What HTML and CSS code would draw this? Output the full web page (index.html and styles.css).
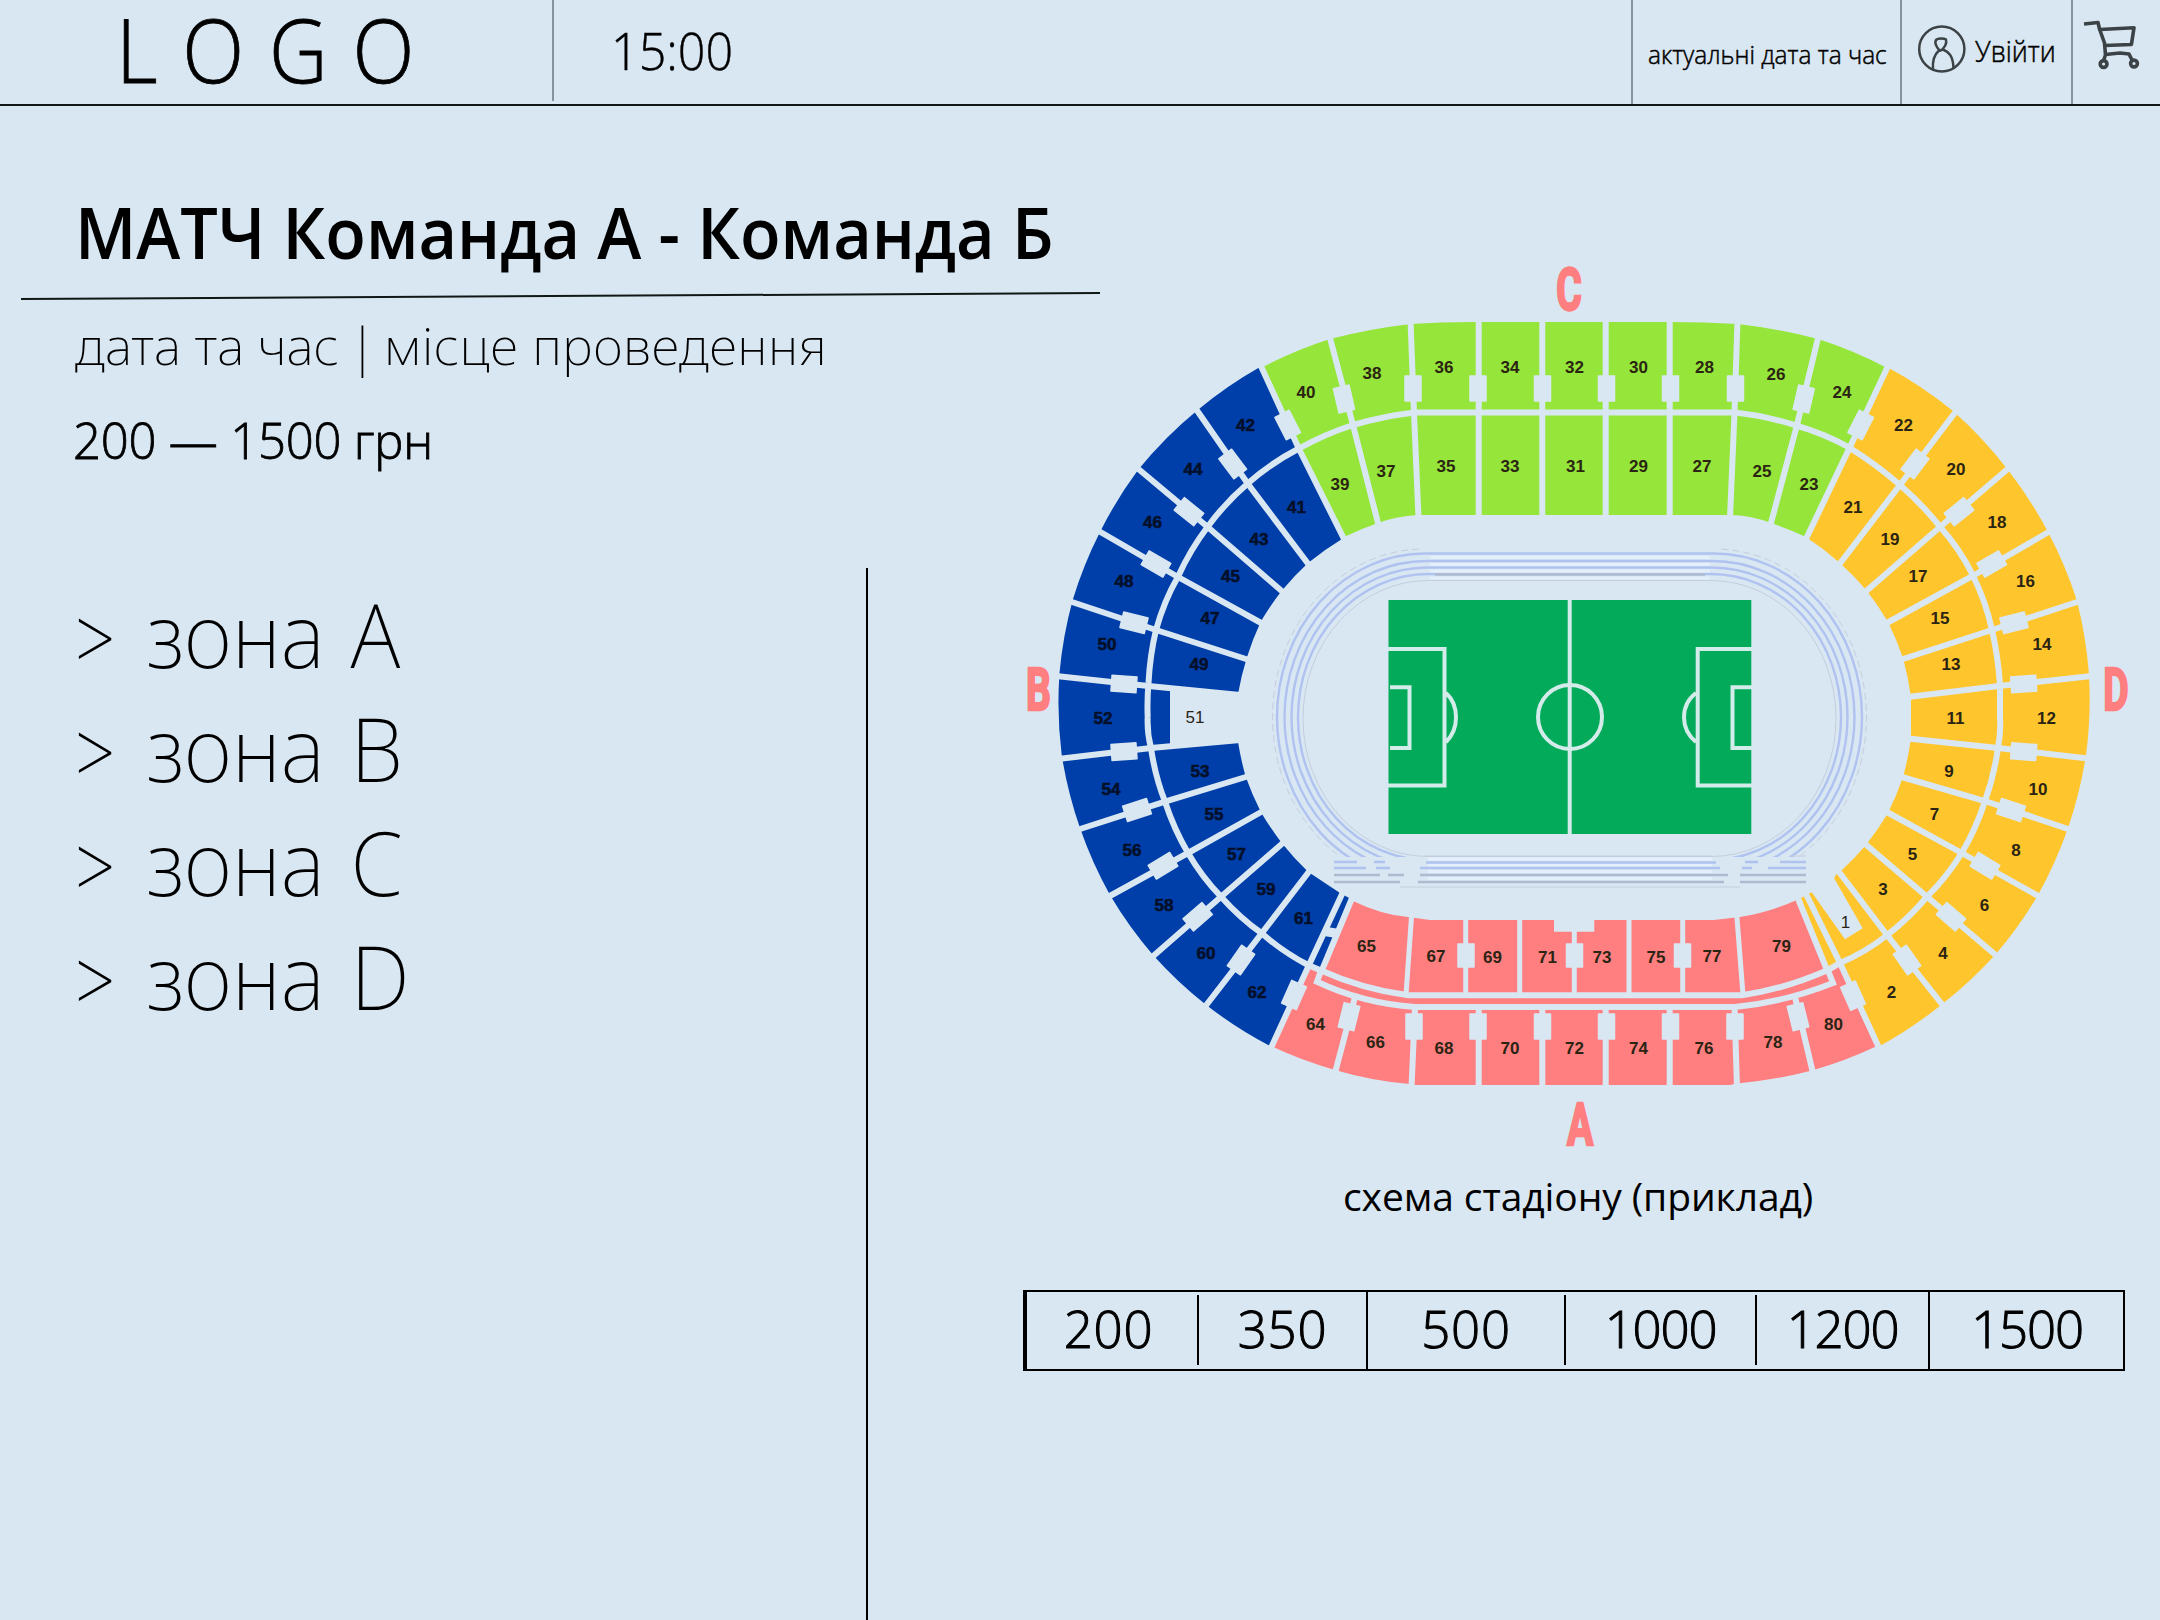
FILE: index.html
```html
<!DOCTYPE html>
<html lang="uk">
<head>
<meta charset="utf-8">
<title>Матч</title>
<link rel="stylesheet" href="styles.css">
</head>
<body>
<header class="topbar">
  <div class="logo"><span>LOGO</span></div>
  <div class="clock"><span>15:00</span></div>
  <div class="now"><span>актуальні дата та час</span></div>
  <div class="login">
    <svg class="user-icon" width="50" height="50" viewBox="1917 24 50 50"><ellipse cx="1941.8" cy="49" rx="22.6" ry="22.4"/><path d="M1940 51C1936 47 1934 42 1936.500 39.500C1939 38 1944 38 1946 39.500C1947 43 1945 48 1940 51M1933 69C1932.500 62 1934 55 1938.500 51L1943 49.500C1949 52 1953 56 1953.500 68"/></svg>
    <span>Увійти</span>
  </div>
  <div class="cart">
    <svg class="cart-icon" width="62" height="54" viewBox="2080 18 62 54"><path d="M2084 24L2098 22.500L2099.500 29L2104.500 43L2105.500 55L2103 62M2100 29.500L2134 27.700L2131.400 44.500L2104.600 45.500M2105.500 54.500L2120 53L2129 54L2133 62"/><circle cx="2103.600" cy="64" r="3.400"/><circle cx="2134" cy="63.500" r="3.400"/></svg>
  </div>
</header>
<main class="page">
  <section class="info">
    <h1>МАТЧ Команда А - Команда Б</h1>
    <svg class="rule" width="1080" height="10" viewBox="0 0 1080 10"><path d="M0 8L1079 2"/></svg>
    <p class="meta">дата та час <span class="bar">|</span> <span class="place">місце проведення</span></p>
    <p class="price">200 — 1500 грн</p>
    <ul class="zones">
      <li><span class="mark">&gt;</span><span class="zone">зона A</span></li>
      <li><span class="mark">&gt;</span><span class="zone">зона B</span></li>
      <li><span class="mark">&gt;</span><span class="zone">зона C</span></li>
      <li><span class="mark">&gt;</span><span class="zone">зона D</span></li>
    </ul>
  </section>
  <section class="plan">
    <svg class="stadium" width="1140" height="910" viewBox="1020 250 1140 910">
      <defs><clipPath id="upper"><path d="M1260 540H1880V857H1260Z"/></clipPath></defs>
      <!-- stands -->
      <path class="blue" d="M1260 367A420 420 0 0 0 1197.700 410A420 420 0 0 0 1138 470A420 420 0 0 0 1100 532A420 420 0 0 0 1072.700 600A420 420 0 0 0 1059.500 673A420 420 0 0 0 1061.700 755A420 420 0 0 0 1080 828A420 420 0 0 0 1110 895A420 420 0 0 0 1153 955A420 420 0 0 0 1205 1004A420 420 0 0 0 1270 1046L1308 965L1323 968L1351 899L1340 893L1308 871.700A300 300 0 0 1 1281.700 843A300 300 0 0 1 1260.700 811.700A300 300 0 0 1 1245.700 776.700A300 300 0 0 1 1238 741.700L1170 744V690L1238 694A300 300 0 0 1 1246.700 658A300 300 0 0 1 1260.700 621.700A300 300 0 0 1 1281.700 590.700A300 300 0 0 1 1308 563A300 300 0 0 1 1342 539Z"/>
      <path class="green" d="M1261 368A420 420 0 0 1 1330 339A600 600 0 0 1 1411 324Q1440 322 1475 322H1670Q1705 322 1738 324A600 600 0 0 1 1818 339A420 420 0 0 1 1887 368L1806 537A300 300 0 0 0 1771 523Q1750 515 1730 515H1418Q1397 516 1378 523A300 300 0 0 0 1344 537Z"/>
      <path class="yellow" d="M1887 367A420 420 0 0 1 1953 411A420 420 0 0 1 2008 470A420 420 0 0 1 2048 532A420 420 0 0 1 2076.700 600A420 420 0 0 1 2089 675A420 420 0 0 1 2086 755A420 420 0 0 1 2068 828A420 420 0 0 1 2038 895A420 420 0 0 1 1995 955A420 420 0 0 1 1941 1005A420 420 0 0 1 1878 1047L1840 963L1826 968L1801 898L1811.700 892.300L1845 939.300L1862.700 928.300L1834 878L1838 872L1842 870A300 300 0 0 0 1866 845A300 300 0 0 0 1888 813A300 300 0 0 0 1903 777A300 300 0 0 0 1911 738V697A300 300 0 0 0 1903 658A300 300 0 0 0 1888 622A300 300 0 0 0 1867 591A300 300 0 0 0 1840 563A300 300 0 0 0 1806 537Z"/>
      <path class="pink" d="M1353 901Q1382 915 1408 917L1430 920H1554V931.700H1594.300V920H1714L1740 917Q1768 913 1796.700 900L1827 967L1840 965L1877 1046A420 420 0 0 1 1812 1070.500Q1775 1080 1737 1083.500L1730 1085H1415L1410 1084Q1372 1081 1335 1070A420 420 0 0 1 1271 1046L1308 965L1323 968Z"/>
      <!-- aisles -->
      <g class="aisle">
        <path d="M1147.700 717Q1147 700 1148.500 683Q1150 655 1156 630Q1164 601 1178 576.700Q1190 550 1207.700 526.700Q1225 503 1248 483.300Q1271 463 1298 449Q1325 434 1353 425Q1384 416 1415 412.500H1735Q1767 416 1796.700 425.700Q1825 434 1850 448Q1877 465 1900 485Q1922 504 1940 526.700Q1960 549 1972.700 575Q1986 602 1992 630Q1998 656 2000 685V717Q2001 732 1998 748Q1994 776 1985 801Q1976 829 1961.700 853Q1947 877 1927 896.700Q1909 918 1887.300 935Q1866 952 1840 963L1828 970Q1785 989 1741.700 995.300H1408Q1362 989 1321.700 970.700L1308 965Q1283 952 1261.700 933.300Q1240 918 1221 896.700Q1202 877 1188 853Q1174 829 1165 801.700Q1155 776 1151 748Q1147 733 1147.700 717"/>
        <path d="M1322 968L1317 981.700Q1362 1003 1415 1007H1735Q1785 1002 1833 983L1827 968"/>
        <path d="M1330 338L1353 425L1378.500 525M1410.500 320L1414 413L1418.500 518M1478.700 318V518M1542.300 318V518M1605.700 318V518M1669.700 318V518M1737.500 320L1734.500 413L1730 518M1818.500 336L1797 425L1770.500 525"/>
        <path d="M1260 364L1299 449L1345 541M1196 409L1248 484L1309 565M1136 467L1207.700 527L1284 593M1097 530L1178 577L1263 624M1069 601L1156 630L1249 660M1056 676L1148.500 686L1240 695M1058 759L1151 748L1240 740M1077 830L1165 801.700L1249 776M1108 897L1188 853L1263 811M1151 958L1221 896.700L1284 842M1204 1008L1261.700 933.300L1311 869M1270 1050L1309 965L1343 892M1322 970L1352.500 897"/>
        <path d="M1889 364L1849 449L1805 541M1957 410L1900 485L1838 566M2010 467L1940 527L1864 593M2052 530L1972.700 576L1885 624M2080 601L1992 630L1900 660M2092 676L1999 686L1908 697M2088 758.500L1998 748L1908 738.500M2071 830L1985 801L1900 776.500M2040 897L1961.700 853L1885 811M1998 957L1927 896.700L1864 843M1945 1008L1887 935L1836 868M1880 1050L1840 963L1805 892M1827 970L1797 896"/>
        <path d="M1335 1073L1355 997M1411.500 1088L1415 1007M1478.700 1088V1007M1542.300 1088V1007M1605.700 1088V1007M1669.700 1088V1007M1737 1088L1734.500 1007M1813 1073L1795 997"/>
        <path class="thin" d="M1411.700 914L1406 995M1465.700 917V995M1519.700 917V995M1574.300 928V995M1629 917V995M1682.700 917V995M1736.700 914L1743 995"/>
      </g>
      <!-- stairways -->
      <g class="gate">
        <path d="M1405 376h16v25h-16zM1470 376h16v25h-16zM1534.500 376h16v25h-16zM1598.500 376h16v25h-16zM1662.500 376h16v25h-16zM1727.500 376h16v25h-16z"/>
        <path d="M1406 1014h16v25h-16zM1470 1014h16v25h-16zM1534.500 1014h16v25h-16zM1598.500 1014h16v25h-16zM1662.500 1014h16v25h-16zM1727 1014h16v25h-16zM1458 944h16v23h-16zM1566.500 944h16v23h-16zM1674.500 944h16v23h-16z"/>
        <path d="M-8-12.500h16v25h-16z" transform="translate(1344 399)rotate(-13)"/>
        <path d="M-8-12.500h16v25h-16z" transform="translate(1287.700 425)rotate(-27)"/>
        <path d="M-8-12.500h16v25h-16z" transform="translate(1232.700 464)rotate(-37)"/>
        <path d="M-8-12.500h16v25h-16z" transform="translate(1189 511.700)rotate(-51)"/>
        <path d="M-8-12.500h16v25h-16z" transform="translate(1156 564)rotate(-60)"/>
        <path d="M-8-12.500h16v25h-16z" transform="translate(1134 622.700)rotate(-76)"/>
        <path d="M-8-12.500h16v25h-16z" transform="translate(1124 684)rotate(-86)"/>
        <path d="M-8-12.500h16v25h-16z" transform="translate(1124 751.700)rotate(86)"/>
        <path d="M-8-12.500h16v25h-16z" transform="translate(1137 810)rotate(72)"/>
        <path d="M-8-12.500h16v25h-16z" transform="translate(1163 865.700)rotate(59)"/>
        <path d="M-8-12.500h16v25h-16z" transform="translate(1197.700 916.700)rotate(49)"/>
        <path d="M-8-12.500h16v25h-16z" transform="translate(1241 960)rotate(35)"/>
        <path d="M-8-12.500h16v25h-16z" transform="translate(1294 995)rotate(24)"/>
        <path d="M-8-12.500h16v25h-16z" transform="translate(1349 1016.700)rotate(14)"/>
        <path d="M-8-12.500h16v25h-16z" transform="translate(1803.700 399)rotate(13)"/>
        <path d="M-8-12.500h16v25h-16z" transform="translate(1860.700 425)rotate(27)"/>
        <path d="M-8-12.500h16v25h-16z" transform="translate(1915 464)rotate(37)"/>
        <path d="M-8-12.500h16v25h-16z" transform="translate(1959 511.700)rotate(51)"/>
        <path d="M-8-12.500h16v25h-16z" transform="translate(1991.700 564)rotate(60)"/>
        <path d="M-8-12.500h16v25h-16z" transform="translate(2014 622.700)rotate(76)"/>
        <path d="M-8-12.500h16v25h-16z" transform="translate(2023.700 684)rotate(86)"/>
        <path d="M-8-12.500h16v25h-16z" transform="translate(2023.700 751.700)rotate(-86)"/>
        <path d="M-8-12.500h16v25h-16z" transform="translate(2011 810)rotate(-72)"/>
        <path d="M-8-12.500h16v25h-16z" transform="translate(1985 865.700)rotate(-59)"/>
        <path d="M-8-12.500h16v25h-16z" transform="translate(1951 916.700)rotate(-49)"/>
        <path d="M-8-12.500h16v25h-16z" transform="translate(1907 960)rotate(-35)"/>
        <path d="M-8-12.500h16v25h-16z" transform="translate(1853 995.700)rotate(-24)"/>
        <path d="M-8-12.500h16v25h-16z" transform="translate(1798 1016.700)rotate(-14)"/>
        <path d="M-4-4h12v8h-12z" transform="translate(1329 932)rotate(10)"/>
      </g>
      <!-- running track -->
      <g class="track" clip-path="url(#upper)">
        <rect class="lane" x="1277" y="553.500" width="585" height="327" rx="148" ry="163.500"/>
        <rect class="lane" x="1284.500" y="561" width="570" height="312" rx="142" ry="156"/>
        <rect class="lane" x="1291.500" y="567.500" width="556" height="299" rx="136" ry="149.500"/>
        <rect class="lane" x="1298" y="574" width="543" height="286" rx="130" ry="143"/>
        <rect class="edge dashed" x="1272.500" y="549" width="594" height="336" rx="152" ry="168"/>
        <rect class="edge" x="1303" y="580.500" width="533" height="276" rx="125" ry="138"/>
        <path class="mask" d="M1420 549H1720"/>
        <path class="glow" d="M1430 557.500H1710M1430 564.500H1710M1430 571H1710M1430 578H1710"/>
        <path class="grey" d="M1435 574.500H1705"/>
      </g>
      <g class="track">
        <path class="glow" d="M1428 859H1712M1428 865H1712M1428 871.500H1712M1428 878.500H1712"/>
        <path class="lane" d="M1334 862H1357M1374 862H1385M1426 862.500H1716M1745 862H1758M1780 862H1806M1334 868H1366M1376 868H1390M1420 868H1720M1742 868H1752M1768 868H1806"/>
        <path class="grey" d="M1334 875H1380M1388 875H1404M1420 875H1728M1740 875H1806M1334 882H1400M1418 882H1724M1740 882H1806"/>
        <path class="edge" d="M1425 856H1712M1790 856H1806M1400 887H1740"/>
      </g>
      <!-- pitch -->
      <path class="pitch" d="M1388.500 600H1751.300V834H1388.500Z"/>
      <g class="markings">
        <path d="M1569.700 600V834M1388 649H1444.500V785.500H1388M1390 687.300H1409.500V748H1390M1752 649H1697.700V785.500H1752M1752 687.300H1732.500V748H1752M1446 693Q1456 702 1456 717.500Q1456 732 1446 742M1696 693Q1684 702 1684 717.500Q1684 732 1696 742"/>
        <circle cx="1570" cy="717" r="32"/>
      </g>
      <g class="stand-name">
        <text transform="translate(1569 310)scale(.66 1)">C</text>
        <text transform="translate(1038.500 710)scale(.66 1)">B</text>
        <text transform="translate(2116 710)scale(.66 1)">D</text>
        <text transform="translate(1580 1145)scale(.66 1)">A</text>
      </g>
      <g class="sector">
        <text x="1306" y="398">40</text><text x="1372" y="379">38</text><text x="1444" y="372.500">36</text><text x="1510" y="372.500">34</text><text x="1574.500" y="372.500">32</text><text x="1638.500" y="372.500">30</text><text x="1704.500" y="372.500">28</text><text x="1776" y="379.500">26</text><text x="1842" y="398">24</text>
        <text x="1340" y="490">39</text><text x="1386" y="476.500">37</text><text x="1446" y="471.500">35</text><text x="1510" y="471.500">33</text><text x="1575.500" y="471.500">31</text><text x="1638.500" y="471.500">29</text><text x="1702" y="471.500">27</text><text x="1762" y="477">25</text><text x="1809" y="490">23</text>
        <text x="1903.500" y="431">22</text><text x="1956" y="475">20</text><text x="1997" y="528">18</text><text x="2025.500" y="586.500">16</text><text x="2042" y="650">14</text><text x="2046.500" y="723.500">12</text><text x="2038" y="795">10</text><text x="2016" y="856">8</text><text x="1984.500" y="911">6</text><text x="1943" y="958.500">4</text><text x="1891.500" y="998">2</text>
        <text x="1853" y="513">21</text><text x="1890" y="544.500">19</text><text x="1918" y="582">17</text><text x="1940" y="624">15</text><text x="1951" y="670">13</text><text x="1955.500" y="723.500">11</text><text x="1949" y="776.500">9</text><text x="1934.500" y="819.500">7</text><text x="1912.500" y="859.500">5</text><text x="1883" y="895">3</text><text class="regular" x="1845.500" y="927.500">1</text>
        <g class="on-blue">
        <text x="1245.500" y="431">42</text><text x="1193" y="475">44</text><text x="1152.500" y="527.500">46</text><text x="1124" y="586.500">48</text><text x="1107" y="650">50</text><text x="1103" y="723.500">52</text><text x="1111" y="795">54</text><text x="1132" y="856">56</text><text x="1164" y="911">58</text><text x="1206" y="958.500">60</text><text x="1257" y="998">62</text>
        <text x="1296.500" y="513">41</text><text x="1259" y="544.500">43</text><text x="1230.500" y="582">45</text><text x="1210" y="624">47</text><text x="1199" y="670">49</text><text x="1200" y="776.500">53</text><text x="1214" y="819.500">55</text><text x="1236.500" y="859.500">57</text><text x="1266" y="895">59</text><text x="1303.500" y="924">61</text>
        </g>
        <text class="regular" x="1195" y="723">51</text>
        <text x="1366.500" y="951.500">65</text><text x="1436" y="962">67</text><text x="1492.500" y="963">69</text><text x="1547.500" y="963">71</text><text x="1602" y="963">73</text><text x="1656" y="963">75</text><text x="1712" y="962">77</text><text x="1781.500" y="951.500">79</text>
        <text x="1315.500" y="1030">64</text><text x="1375.500" y="1047.500">66</text><text x="1444" y="1054">68</text><text x="1510" y="1054">70</text><text x="1574.500" y="1054">72</text><text x="1638.500" y="1054">74</text><text x="1704" y="1054">76</text><text x="1773" y="1047.500">78</text><text x="1833.500" y="1030">80</text>
      </g>
    </svg>
    <p class="caption">схема стадіону (приклад)</p>
    <div class="prices">
      <span class="first">200</span><span>350</span><span class="full">500</span><span class="long">1000</span><span class="long">1200</span><span class="full long">1500</span>
    </div>
  </section>
</main>
</body>
</html>
```
FILE: styles.css
```css
* { box-sizing: border-box; margin: 0; padding: 0; }
body {
  width: 2160px;
  height: 1620px;
  overflow: hidden;
  background: #d9e7f2;
  color: #000;
  font-family: "Open Sans", "Noto Sans", sans-serif;
  font-weight: 300;
}
svg { display: block; overflow: visible; }

.topbar {
  display: flex;
  height: 106px;
  border-bottom: 2px solid #101816;
  white-space: nowrap;
}
.topbar span { display: inline-block; transform-origin: 0 50%; }
.logo {
  width: 554px;
  height: 101px;
  padding-left: 116px;
  border-right: 2px solid #8493a0;
  font-size: 88px;
  line-height: 99px;
  letter-spacing: 27px;
  -webkit-text-stroke: .8px #000;
}
.logo span { transform: scaleX(.92); }
.clock { flex: 1; padding-left: 57px; font-size: 51px; line-height: 100px; -webkit-text-stroke: .4px #000; }
.clock span { transform: scaleX(.95); }
.now { width: 269px; padding-left: 15px; border-left: 2px solid #8493a0; font-size: 26px; line-height: 109px; -webkit-text-stroke: .5px #000; }
.now span { transform: scaleX(.94); }
.login { display: flex; width: 171px; padding-left: 15px; gap: 8px; border-left: 2px solid #8493a0; font-size: 30px; line-height: 102px; -webkit-text-stroke: .5px #000; }
.login span { transform: scaleX(.89); }
.cart { width: 89px; padding: 18px 0 0 7px; border-left: 2px solid #8493a0; }
.user-icon { margin-top: 24px; flex: none; fill: none; stroke: #3c4346; stroke-width: 2.5; }
.cart-icon { fill: none; stroke: #3c4346; stroke-width: 3.6; stroke-linejoin: round; }

.page { display: grid; grid-template-columns: 868px 1292px; height: 1514px; }
.info { display: flex; flex-direction: column; padding-top: 85px; white-space: nowrap; }
h1 { padding-left: 75px; font-size: 70px; line-height: 82px; font-weight: 600; transform: scaleX(.951); transform-origin: 75px 50%; }
.rule { flex: none; margin: 18px 0 0 21px; fill: none; stroke: #101816; stroke-width: 2; }
.meta { margin-top: 9px; padding-left: 75px; font-family: "Noto Sans", sans-serif; font-weight: 200; font-size: 52px; line-height: 70px; }
.bar { margin: 0 -6px 0 -4px; }
.place { letter-spacing: .5px; }
.price { margin-top: 30px; padding-left: 73px; font-size: 49px; line-height: 61px; letter-spacing: -.2px; -webkit-text-stroke: .8px #000; }
.zones {
  flex: 1;
  margin-top: 97px;
  padding-top: 9px;
  border-right: 2px solid #000;
  list-style: none;
  font-family: "Noto Sans", sans-serif;
  font-weight: 200;
  font-size: 88px;
  line-height: 114px;
}
.zones li { display: flex; padding-left: 75px; }
.zone { transform: scaleX(.96); transform-origin: 0 50%; word-spacing: 4px; }
.mark { width: 71px; font-size: 88px; height: 114px; line-height: 120px; transform: scaleX(.8); transform-origin: 0 50%; }

.plan { padding: 144px 0 0 152px; }
.caption { margin-top: 11px; padding-left: 323px; font-size: 39px; line-height: 50px; font-weight: 400; letter-spacing: -.1px; }
.prices {
  display: grid;
  grid-template-columns: 170px 169px 198px 191px 173px 196px;
  width: 1102px;
  height: 81px;
  margin: 69px 0 0 3px;
  border: 2px solid #000;
  border-left-width: 4px;
  font-size: 51px;
  line-height: 67px;
  letter-spacing: .7px;
  text-align: center;
  -webkit-text-stroke: 1px #000;
}
.prices span { margin: 3px 0 4px; }
.prices .first { padding-right: 7px; }
.prices .long { letter-spacing: -1.2px; }
.prices .full { margin: 0; padding-top: 3px; }
.prices span + span { border-left: 2px solid #000; }

.blue { fill: #003fa9; }
.green { fill: #95e53a; }
.yellow { fill: #ffc52d; }
.pink { fill: #ff7f80; }
.aisle { fill: none; stroke: #d9e7f2; stroke-width: 6; }
.aisle .thin { stroke-width: 5; }
.gate { fill: #d9e7f2; stroke: #d9e7f2; stroke-width: 1.5; stroke-linejoin: round; }
.track { fill: none; }
.lane { stroke: #b0c2f0; stroke-width: 2.4; }
.edge { stroke: #c3cedd; stroke-width: 1; }
.dashed { stroke-dasharray: 7 4; }
.grey { stroke: #aebacf; stroke-width: 2.4; }
.glow { stroke: #e3effb; stroke-width: 3; }
.mask { stroke: #d9e7f2; stroke-width: 3; }
.pitch { fill: #02aa5a; }
.markings { fill: none; stroke: #d3ecea; stroke-width: 4; }
.stand-name { fill: #ff7f80; stroke: #ff7f80; stroke-width: 2.5; font-family: Roboto, sans-serif; font-weight: 700; font-size: 59px; text-anchor: middle; }
.sector { fill: #2b2412; font-family: "Liberation Sans", sans-serif; font-weight: 700; font-size: 17px; text-anchor: middle; }
.on-blue { fill: #04102b; stroke: #04102b; stroke-width: .6; }
.sector .regular { font-weight: 400; }
```
